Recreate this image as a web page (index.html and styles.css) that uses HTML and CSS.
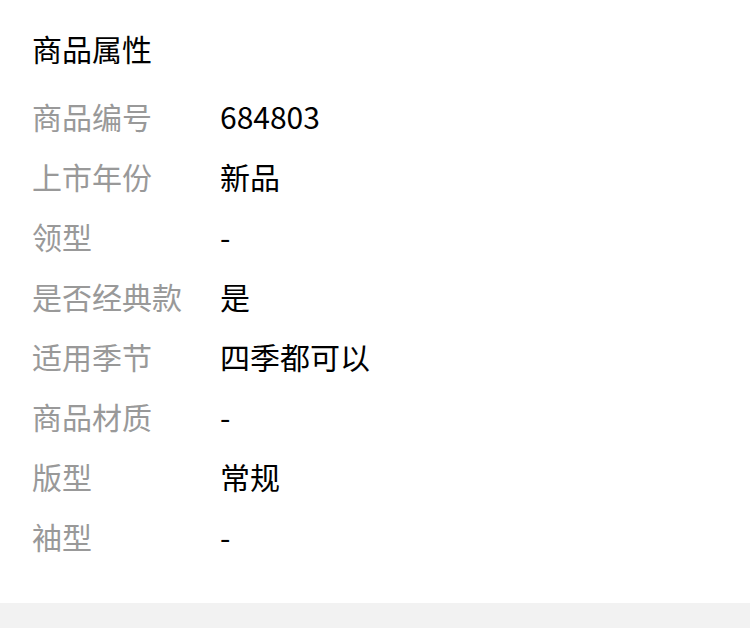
FILE: index.html
```html
<!DOCTYPE html>
<html lang="zh-CN">
  <head>
    <meta charset="UTF-8" />
    <meta name="viewport" content="width=device-width, initial-scale=1.0" />
    <title>商品属性</title>
    <link rel="stylesheet" href="styles.css">
  </head>
  <body>
    <div class="attr-box">
      <div class="attr-title">商品属性</div>
      <div class="attr-list">
        <div class="attr-row">
          <span class="attr-name">商品编号</span>
          <span class="attr-value">684803</span>
        </div>
        <div class="attr-row">
          <span class="attr-name">上市年份</span>
          <span class="attr-value">新品</span>
        </div>
        <div class="attr-row">
          <span class="attr-name">领型</span>
          <span class="attr-value">-</span>
        </div>
        <div class="attr-row">
          <span class="attr-name">是否经典款</span>
          <span class="attr-value">是</span>
        </div>
        <div class="attr-row">
          <span class="attr-name">适用季节</span>
          <span class="attr-value">四季都可以</span>
        </div>
        <div class="attr-row">
          <span class="attr-name">商品材质</span>
          <span class="attr-value">-</span>
        </div>
        <div class="attr-row">
          <span class="attr-name">版型</span>
          <span class="attr-value">常规</span>
        </div>
        <div class="attr-row">
          <span class="attr-name">袖型</span>
          <span class="attr-value">-</span>
        </div>
      </div>
    </div>
    <div class="page-gap"></div>
  </body>
</html>
```

FILE: styles.css
```css
body {
  margin: 0;
  font-family: "Noto Sans CJK SC", "Noto Sans", sans-serif;
  background-color: #fff;
}
.attr-box {
  padding: 18px 32px 37px;
  background-color: #fff;
}
.attr-title {
  font-size: 30px;
  line-height: 60px;
  color: #000;
  margin-bottom: 8px;
}
.attr-row {
  display: grid;
  grid-template-columns: 188px 1fr;
  height: 60px;
  align-items: center;
  font-size: 30px;
}
.attr-name {
  color: #999;
}
.attr-value {
  color: #000;
}
.page-gap {
  height: 40px;
  background-color: #f2f2f2;
}
```
